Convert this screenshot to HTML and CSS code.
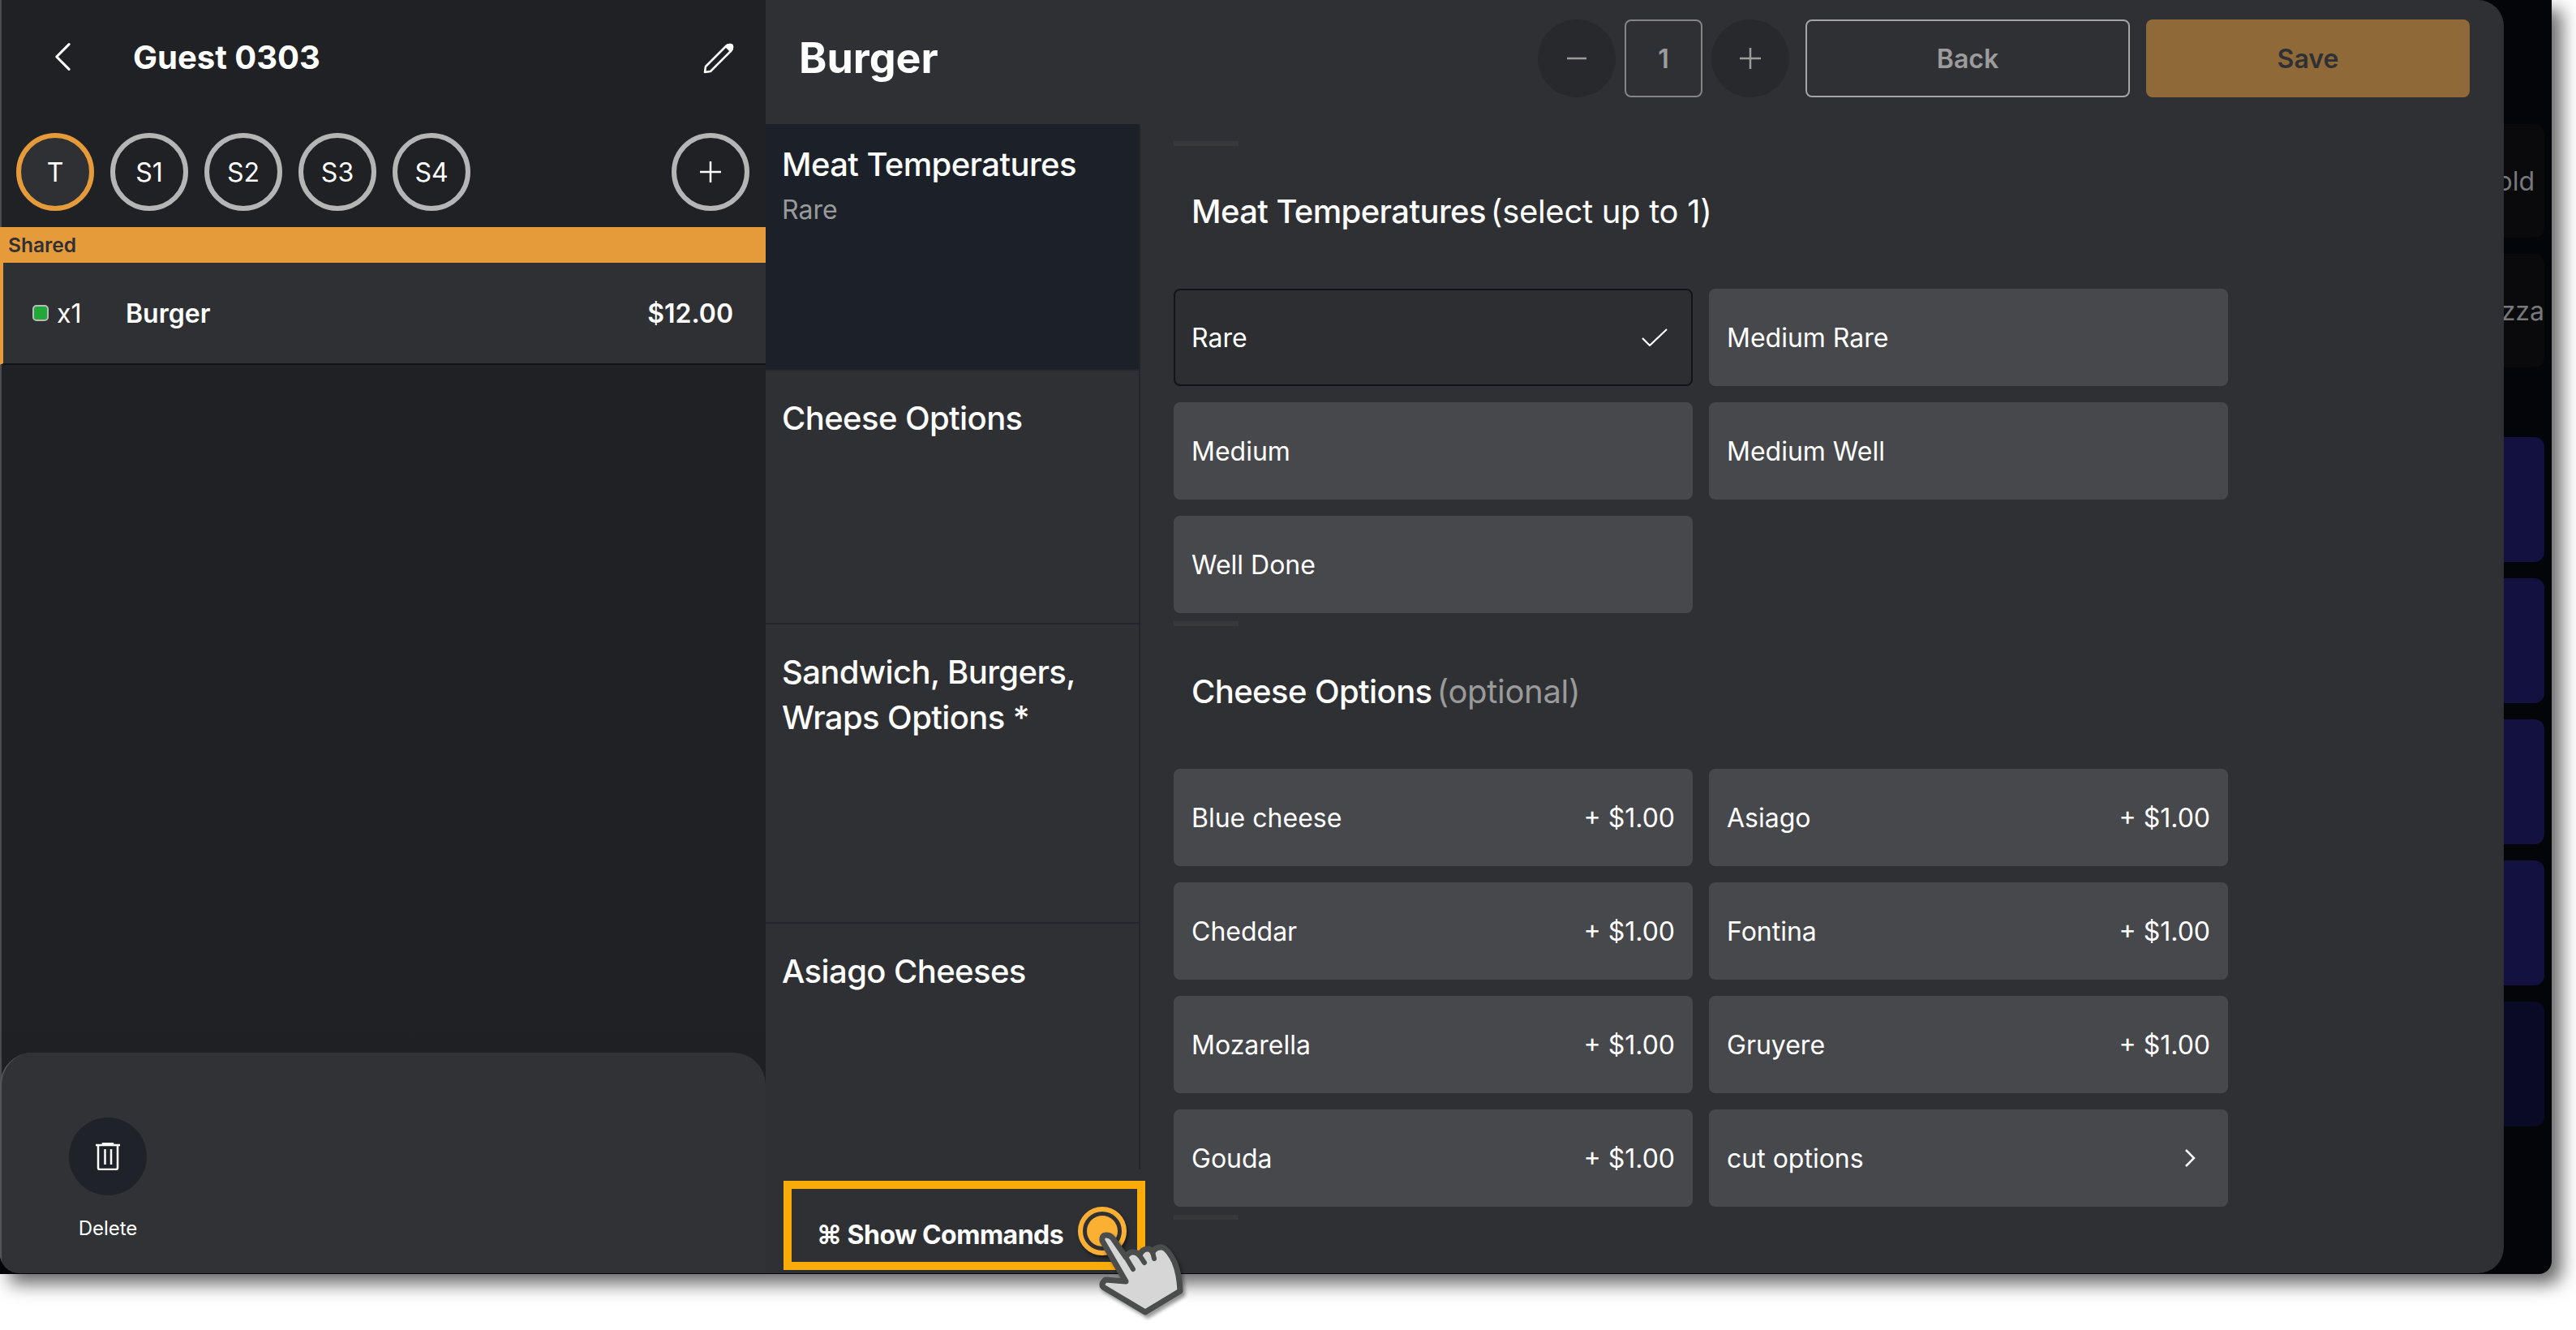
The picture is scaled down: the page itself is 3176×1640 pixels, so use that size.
FILE: index.html
```html
<!DOCTYPE html>
<html lang="en">

<head>
    <meta charset="UTF-8">
    <title>Guest 0303 - Burger</title>
    <link rel="stylesheet" href="styles.css">
</head>

<body>

    <div class="window">
        <div class="backdrop">
            <div class="bg-card bg-card-plain bg-card-old"><span>old</span></div>
            <div class="bg-card bg-card-plain"><span>zza</span></div>
            <div class="bg-card bg-card-blue bg-card-first"></div>
            <div class="bg-card bg-card-blue"></div>
            <div class="bg-card bg-card-blue"></div>
            <div class="bg-card bg-card-blue"></div>
            <div class="bg-card bg-card-dark"></div>
        </div>

        <div class="sheet">
            <div class="order-panel">
                <div class="order-head">
                    <svg class="back-icon" viewBox="0 0 24 40"><path d="M21 3 L4 20 L21 37" /></svg>
                    <div class="guest-name">Guest 0303</div>
                    <svg class="edit-icon" viewBox="0 0 40 40">
                        <path d="M3 37 L4 30 L29 5 Q31 3 34 3 Q37 3 37 6 Q37 9 35 11 L10 36 Z" />
                        <path class="edit-cap" d="M29 5 Q31 3 34 3 Q37 3 37 6 Q37 9 35 11 Z" />
                    </svg>
                </div>
                <div class="seats">
                    <div class="seat seat-active">T</div>
                    <div class="seat">S1</div>
                    <div class="seat">S2</div>
                    <div class="seat">S3</div>
                    <div class="seat">S4</div>
                    <div class="seat seat-add"><svg viewBox="0 0 30 30"><path d="M15 2 V28 M2 15 H28" /></svg></div>
                </div>
                <div class="shared-bar">Shared</div>
                <div class="order-row">
                    <span class="status-dot"></span>
                    <span class="order-qty">x1</span>
                    <span class="order-name">Burger</span>
                    <span class="order-price">$12.00</span>
                </div>
                <div class="action-sheet">
                    <div class="action">
                        <div class="action-circle">
                            <svg viewBox="0 0 30 34"><path d="M0 3 H30 M9 3 V1 H21 V3 M3 3 V31 Q3 33 5 33 H25 Q27 33 27 31 V3 M11.5 8 V27 M19 8 V27" /></svg>
                        </div>
                        <div class="action-label">Delete</div>
                    </div>
                </div>
            </div>

            <div class="editor">
                <div class="editor-head">
                    <h1 class="item-title">Burger</h1>
                    <div class="editor-actions">
                        <div class="qty-btn"><svg viewBox="0 0 30 30"><path d="M3 15 H27" /></svg></div>
                        <div class="qty-value">1</div>
                        <div class="qty-btn"><svg viewBox="0 0 30 30"><path d="M15 2 V28 M2 15 H28" /></svg></div>
                        <div class="btn btn-back">Back</div>
                        <div class="btn btn-save">Save</div>
                    </div>
                </div>

                <div class="editor-body">
                    <div class="groups">
                        <div class="group group-active">
                            <div class="group-name">Meat Temperatures</div>
                            <div class="group-value">Rare</div>
                        </div>
                        <div class="group">
                            <div class="group-name">Cheese Options</div>
                        </div>
                        <div class="group group-tall">
                            <div class="group-name">Sandwich, Burgers, Wraps Options *</div>
                        </div>
                        <div class="group group-last">
                            <div class="group-name">Asiago Cheeses</div>
                        </div>
                    </div>

                    <div class="options-pane">
                        <div class="tick"></div>
                        <div class="section-title">Meat Temperatures <span>(select up to 1)</span></div>
                        <div class="option-grid">
                            <div class="option option-selected">
                                <span>Rare</span>
                                <svg class="check-icon" viewBox="0 0 32 22"><path d="M1 12 L10 21 L31 1" /></svg>
                            </div>
                            <div class="option"><span>Medium Rare</span></div>
                            <div class="option"><span>Medium</span></div>
                            <div class="option"><span>Medium Well</span></div>
                            <div class="option"><span>Well Done</span></div>
                        </div>
                        <div class="tick tick-mid"></div>
                        <div class="section-title">Cheese Options <span class="section-note">(optional)</span></div>
                        <div class="option-grid">
                            <div class="option"><span>Blue cheese</span><span>+ $1.00</span></div>
                            <div class="option"><span>Asiago</span><span>+ $1.00</span></div>
                            <div class="option"><span>Cheddar</span><span>+ $1.00</span></div>
                            <div class="option"><span>Fontina</span><span>+ $1.00</span></div>
                            <div class="option"><span>Mozarella</span><span>+ $1.00</span></div>
                            <div class="option"><span>Gruyere</span><span>+ $1.00</span></div>
                            <div class="option"><span>Gouda</span><span>+ $1.00</span></div>
                            <div class="option">
                                <span>cut options</span>
                                <svg class="chevron-icon" viewBox="0 0 14 24"><path d="M2 2 L12 12 L2 22" /></svg>
                            </div>
                        </div>
                        <div class="tick tick-mid"></div>
                    </div>
                </div>
            </div>
        </div>
    </div>

    <!-- callout drawn over the screenshot -->
    <div class="callout">
        <span class="callout-text">⌘ Show Commands</span>
        <span class="callout-dot"></span>
    </div>
    <svg class="hand" viewBox="0 0 150 150">
        <path class="hand-fill" d="M39 40 Q38 33 44 33 Q49 33 52 37 L68 60 Q72 53 78 54 Q82 54 85 58 Q88 50 95 50 Q99 50 101 54 Q105 47 113 48 Q120 50 128 66 Q134 80 135 102 L92 128 L40 97 Q37 93 43 88 L68 90 Z" />
        <path class="hand-line" d="M68 60 L77 75 M85 58 L91 67 M101 54 L103 62" />
    </svg>

</body>

</html>
```

FILE: styles.css
```css
* {
    box-sizing: border-box;
}

body {
    margin: 0;
    width: 3176px;
    height: 1640px;
    position: relative;
    overflow: hidden;
    background-color: #fff;
    font-family: Inter, "Noto Sans", sans-serif;
    color: #fff;
}

.window {
    position: relative;
    width: 3146px;
    height: 1571px;
    background-color: #040508;
    border-radius: 0 0 16px 0;
    box-shadow: 12px 12px 22px rgba(0, 0, 0, 0.6);
}

/* menu grid behind the sheet */
.backdrop {
    display: flex;
    flex-direction: column;
    align-items: flex-end;
    gap: 20px;
    padding: 153px 9px 0 0;
}

.bg-card {
    width: 200px;
    height: 154px;
    border-radius: 12px;
    display: flex;
    align-items: center;
    justify-content: flex-end;
    font-size: 32px;
    color: #77787b;
}

.bg-card-plain {
    height: 140px;
    background-color: #0a0a0d;
}

.bg-card-old {
    padding-right: 12px;
}

.bg-card-first {
    margin-top: 66px;
}

.bg-card-blue {
    background-color: #13113f;
}

.bg-card-dark {
    background-color: #0a0a26;
}

.sheet {
    position: absolute;
    top: 0;
    left: 0;
    width: 3087px;
    height: 1570px;
    display: flex;
    background-color: #2f3034;
    border-radius: 0 32px 32px 24px;
    overflow: hidden;
}

/* left order panel */
.order-panel {
    position: relative;
    width: 944px;
    display: flex;
    flex-direction: column;
    background: linear-gradient(#1f2125, #1f2125 80%, #1b1c1f);
    border-left: 2px solid #4a4b4f;
}

.order-head {
    height: 140px;
    display: flex;
    align-items: center;
    padding: 0 38px 0 64px;
}

.back-icon {
    width: 22px;
    height: 36px;
    fill: none;
    stroke: #fff;
    stroke-width: 3.5;
    stroke-linecap: round;
    stroke-linejoin: round;
}

.guest-name {
    margin-left: 76px;
    font-size: 40px;
    font-weight: 700;
    flex: 1;
}

.edit-icon {
    width: 40px;
    height: 40px;
    margin-top: 4px;
    fill: none;
    stroke: #fff;
    stroke-width: 2.5;
    stroke-linejoin: round;
}

.edit-cap {
    fill: #fff;
}

.seats {
    display: flex;
    gap: 20px;
    padding: 24px 20px 0 18px;
    height: 140px;
}

.seat {
    width: 96px;
    height: 96px;
    border: 6px solid #b5b5b5;
    border-radius: 50%;
    display: flex;
    align-items: center;
    justify-content: center;
    font-size: 32px;
}

.seat-active {
    border-color: #e69b3a;
    background-color: #2f3034;
}

.seat-add {
    margin-left: auto;
}

.seat-add svg {
    width: 30px;
    height: 30px;
    fill: none;
    stroke: #fff;
    stroke-width: 2.5;
}

.shared-bar {
    height: 44px;
    background-color: #e69b3a;
    color: #2f3034;
    font-size: 24.5px;
    font-weight: 600;
    line-height: 44px;
    padding-left: 10px;
    margin-left: -2px;
}

.order-row {
    height: 126px;
    display: flex;
    align-items: center;
    background-color: #2f3034;
    border-left: 4px solid #e69b3a;
    border-bottom: 2px solid #10151a;
    margin-left: -2px;
    padding: 0 40px 0 36px;
    font-size: 32px;
}

.status-dot {
    width: 20px;
    height: 20px;
    background-color: #22a838;
    border: 2px solid #bbb;
    border-radius: 5px;
}

.order-qty {
    margin-left: 10px;
    width: 85px;
}

.order-name {
    font-weight: 600;
    flex: 1;
}

.order-price {
    font-weight: 600;
}

.action-sheet {
    margin-top: auto;
    margin-left: -2px;
    height: 272px;
    background-color: #313236;
    border-radius: 40px 40px 0 0;
    border-left: 2px solid #55565a;
    padding: 80px 0 0 83px;
}

.action {
    width: 96px;
    display: flex;
    flex-direction: column;
    align-items: center;
}

.action-circle {
    width: 96px;
    height: 96px;
    border-radius: 50%;
    background-color: #1f2329;
    display: flex;
    align-items: center;
    justify-content: center;
}

.action-circle svg {
    width: 30px;
    height: 34px;
    fill: none;
    stroke: #fff;
    stroke-width: 2.5;
}

.action-label {
    margin-top: 26px;
    font-size: 24px;
}

/* right side */
.editor {
    flex: 1;
    display: flex;
    flex-direction: column;
}

.editor-head {
    height: 153px;
    display: flex;
    padding: 24px 42px 0 41px;
}

.item-title {
    margin: 0;
    flex: 1;
    font-size: 52px;
    font-weight: 700;
    line-height: 96px;
}

.editor-actions {
    display: flex;
    gap: 11px;
    color: #9c9c9c;
    font-size: 32px;
    font-weight: 600;
}

.qty-btn {
    width: 96px;
    height: 96px;
    border-radius: 50%;
    background-color: #28292c;
    display: flex;
    align-items: center;
    justify-content: center;
}

.qty-btn svg {
    width: 30px;
    height: 30px;
    fill: none;
    stroke: #9c9c9c;
    stroke-width: 2.5;
}

.qty-value {
    width: 96px;
    height: 96px;
    border: 2px solid #858585;
    border-radius: 8px;
    display: flex;
    align-items: center;
    justify-content: center;
}

.btn {
    height: 96px;
    border-radius: 8px;
    display: flex;
    align-items: center;
    justify-content: center;
}

.btn-back {
    width: 400px;
    margin-left: 9px;
    border: 2px solid #a5a5a5;
}

.btn-save {
    width: 399px;
    margin-left: 9px;
    background-color: #8f6a38;
    color: #2f3034;
}

.editor-body {
    flex: 1;
    display: flex;
}

.groups {
    width: 462px;
    height: 1289px;
    border-right: 2px solid #22252a;
}

.group {
    height: 313px;
    padding: 31px 20px;
    border-bottom: 2px solid #22252a;
}

.group-active {
    height: 304px;
    padding-top: 22px;
    background-color: #1c2129;
}

.group-tall {
    height: 369px;
}

.group-last {
    border-bottom: none;
}

.group-name {
    font-size: 40px;
    font-weight: 500;
    letter-spacing: -0.6px;
    line-height: 56px;
}

.group-value {
    margin-top: 8px;
    font-size: 32px;
    color: #9a9a9a;
}

.options-pane {
    padding: 21px 0 0 41px;
    width: 1342px;
}

.tick {
    width: 80px;
    height: 6px;
    background-color: #37383a;
}

.tick-mid {
    margin-top: 10px;
}

.section-title {
    height: 176px;
    padding: 0 22px 16px;
    display: flex;
    align-items: center;
    gap: 6px;
    font-size: 40px;
    font-weight: 500;
    letter-spacing: -0.6px;
}

.section-title span {
    font-weight: 400;
    letter-spacing: -0.3px;
}

.section-note {
    color: #9a9a9a;
}

.option-grid {
    display: grid;
    grid-template-columns: 640px 640px;
    gap: 20px;
}

.option {
    height: 120px;
    padding: 0 22px;
    border-radius: 8px;
    background-color: #47484c;
    display: flex;
    align-items: center;
    justify-content: space-between;
    font-size: 32px;
}

.option-selected {
    background-color: #2d2e32;
    border: 2px solid #10151a;
    padding: 0 20px;
}

.check-icon {
    width: 32px;
    height: 22px;
    margin-right: 9px;
    fill: none;
    stroke: #fff;
    stroke-width: 2.2;
}

.chevron-icon {
    width: 14px;
    height: 24px;
    margin-right: 18px;
    fill: none;
    stroke: #fff;
    stroke-width: 2.5;
}

/* orange callout and pointer over the screenshot */
.callout {
    position: absolute;
    left: 966px;
    top: 1456px;
    width: 446px;
    height: 110px;
    border: 10px solid #f9ab0a;
    display: flex;
    align-items: center;
    padding: 22px 0 0 31px;
    font-size: 32px;
    font-weight: 700;
    letter-spacing: -0.5px;
}

.callout-dot {
    position: absolute;
    left: 353px;
    top: 22px;
    width: 60px;
    height: 60px;
    border-radius: 50%;
    border: 6px solid #fbb034;
    padding: 5px;
    background-color: #fbb034;
    background-clip: content-box;
    box-shadow: 2px 3px 4px rgba(0, 0, 0, 0.5);
}

.hand {
    position: absolute;
    left: 1320px;
    top: 1490px;
    width: 150px;
    height: 150px;
    filter: drop-shadow(3px 4px 2px rgba(0, 0, 0, 0.4));
}

.hand-fill {
    fill: #d6d6d6;
    stroke: #4b4d4d;
    stroke-width: 7;
    stroke-linejoin: round;
}

.hand-line {
    fill: none;
    stroke: #4b4d4d;
    stroke-width: 6;
    stroke-linecap: round;
}
```
